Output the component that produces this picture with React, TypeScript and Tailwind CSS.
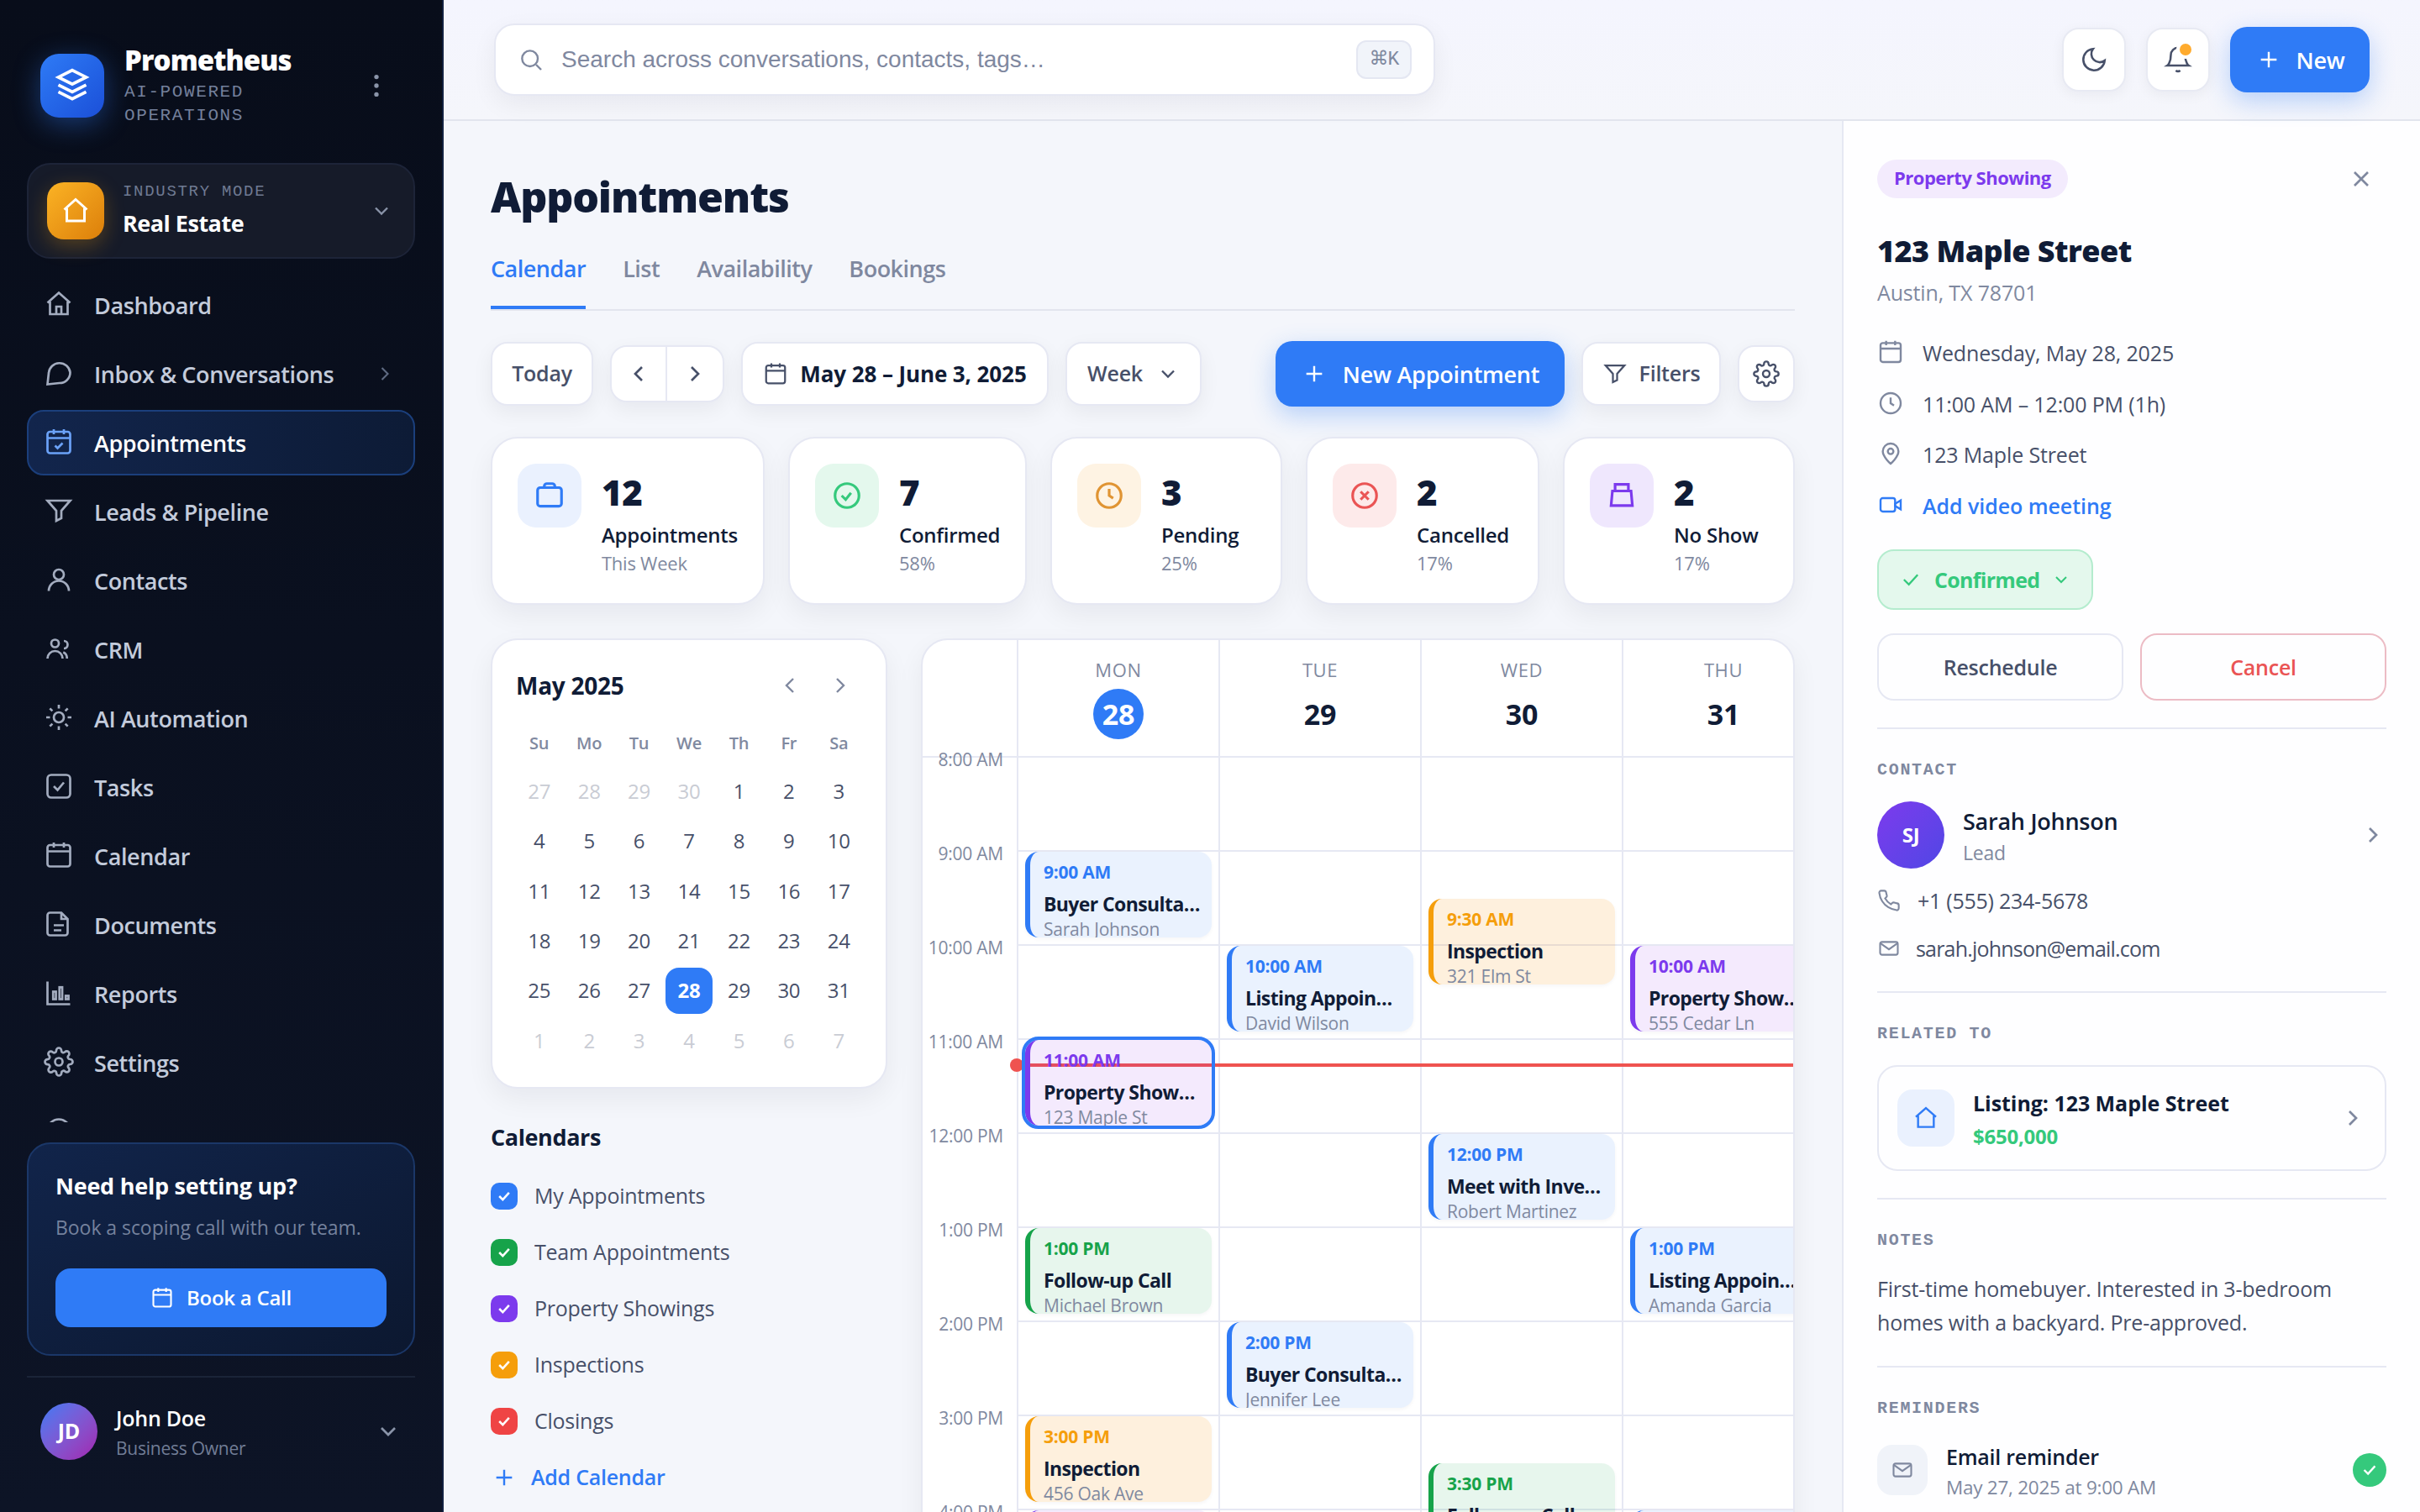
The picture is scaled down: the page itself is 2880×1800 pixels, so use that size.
import clsx from "clsx"
import { FC, ReactNode } from "react"

const MONO = "font-['Liberation_Mono',monospace]"

const GEAR =
  "M19.4 15a1.65 1.65 0 0 0 .33 1.82l.06.06a2 2 0 0 1 0 2.83 2 2 0 0 1-2.83 0l-.06-.06a1.65 1.65 0 0 0-1.82-.33 1.65 1.65 0 0 0-1 1.51V21a2 2 0 0 1-2 2 2 2 0 0 1-2-2v-.09A1.65 1.65 0 0 0 9 19.4a1.65 1.65 0 0 0-1.82.33l-.06.06a2 2 0 0 1-2.83 0 2 2 0 0 1 0-2.83l.06-.06a1.65 1.65 0 0 0 .33-1.82 1.65 1.65 0 0 0-1.51-1H3a2 2 0 0 1-2-2 2 2 0 0 1 2-2h.09A1.65 1.65 0 0 0 4.6 9a1.65 1.65 0 0 0-.33-1.82l-.06-.06a2 2 0 0 1 0-2.83 2 2 0 0 1 2.83 0l.06.06a1.65 1.65 0 0 0 1.82.33H9a1.65 1.65 0 0 0 1-1.51V3a2 2 0 0 1 2-2 2 2 0 0 1 2 2v.09a1.65 1.65 0 0 0 1 1.51 1.65 1.65 0 0 0 1.82-.33l.06-.06a2 2 0 0 1 2.83 0 2 2 0 0 1 0 2.83l-.06.06a1.65 1.65 0 0 0-.33 1.82V9a1.65 1.65 0 0 0 1.51 1H21a2 2 0 0 1 2 2 2 2 0 0 1-2 2h-.09a1.65 1.65 0 0 0-1.51 1z"

const CALENDAR = (
  <>
    <rect x="3" y="4" width="18" height="17" rx="2" />
    <path d="M3 9h18M8 2v4M16 2v4" />
  </>
)

const ICONS: Record<string, ReactNode> = {
  home: <path d="M3 11l9-8 9 8M5 10v10h14V10M10 20v-6h4v6" />,
  house: <path d="M3 11l9-8 9 8M5 10v10h14V10" />,
  chat: <path d="M21 11.6a8.4 8.4 0 0 1-8.6 8.4L3 21l1-9a8.55 8.55 0 0 1 17-.4z" />,
  calendar: CALENDAR,
  calendarCheck: (
    <>
      {CALENDAR}
      <path d="M9 15l2 2 4-4" />
    </>
  ),
  funnel: <path d="M3 4h18l-7 8v6l-4 2v-8z" />,
  user: (
    <>
      <circle cx="12" cy="8" r="4" />
      <path d="M4 21a8 8 0 0 1 16 0" />
    </>
  ),
  users: (
    <>
      <circle cx="9" cy="8" r="3" />
      <path d="M3 20a6 6 0 0 1 12 0M16 6a3 3 0 0 1 0 6M15.5 15c2 .8 3 2.6 3 5" />
    </>
  ),
  sun: (
    <>
      <circle cx="12" cy="12" r="4" />
      <path d="M12 2v3M12 19v3M2 12h3M19 12h3M4.9 4.9l2 2M17.1 17.1l2 2M4.9 19.1l2-2M17.1 6.9l2-2" />
    </>
  ),
  task: (
    <>
      <rect x="3" y="3" width="18" height="18" rx="3" />
      <path d="M8 12l3 3 5-6" />
    </>
  ),
  doc: (
    <path d="M14 3H5a2 2 0 0 0-2 2v14a2 2 0 0 0 2 2h12a2 2 0 0 0 2-2V8zM14 3v5h5M8 13h8M8 17h6" />
  ),
  chart: (
    <>
      <path d="M3 3v18h18" />
      <rect x="7.5" y="11" width="2.2" height="6" />
      <rect x="12.5" y="7.5" width="2.2" height="9.5" />
      <rect x="17.5" y="14.3" width="2.2" height="2.7" />
    </>
  ),
  gear: (
    <>
      <circle cx="12" cy="12" r="3" />
      <path d={GEAR} />
    </>
  ),
  help: <circle cx="12" cy="12" r="9" />,
  layers: <path d="M12 2l9 4.5-9 4.5-9-4.5zM3 11.5l9 4.5 9-4.5M3 16l9 4.5 9-4.5" />,
  search: (
    <>
      <circle cx="11" cy="11" r="7" />
      <path d="M21 21l-4.5-4.5" />
    </>
  ),
  moon: <path d="M21 12.8A9 9 0 1 1 11.2 3 7 7 0 0 0 21 12.8z" />,
  bell: <path d="M6 8a6 6 0 0 1 12 0c0 7 3 9 3 9H3s3-2 3-9M10.3 21a2 2 0 0 0 3.4 0" />,
  plus: <path d="M12 5v14M5 12h14" />,
  x: <path d="M6 6l12 12M18 6L6 18" />,
  down: <path d="M6 9l6 6 6-6" />,
  left: <path d="M15 6l-6 6 6 6" />,
  right: <path d="M9 6l6 6-6 6" />,
  check: <path d="M5 12l5 5 9-10" />,
  case: (
    <>
      <rect x="3" y="6" width="18" height="14" rx="2" />
      <path d="M8 6V5a2 2 0 0 1 2-2h4a2 2 0 0 1 2 2v1" />
    </>
  ),
  okCircle: (
    <>
      <circle cx="12" cy="12" r="9" />
      <path d="M8 12l3 3 4-5" />
    </>
  ),
  xCircle: (
    <>
      <circle cx="12" cy="12" r="9" />
      <path d="M9 9l6 6M15 9l-6 6" />
    </>
  ),
  clock: (
    <>
      <circle cx="12" cy="12" r="9" />
      <path d="M12 7v5l3 2" />
    </>
  ),
  bin: <path d="M5 8.5h14l1 11H4zM7 8.5v-5h10v5" />,
  pin: (
    <>
      <path d="M12 21s-7-6-7-11a7 7 0 0 1 14 0c0 5-7 11-7 11z" />
      <circle cx="12" cy="10" r="2.5" />
    </>
  ),
  video: (
    <>
      <rect x="3" y="6" width="13" height="12" rx="2" />
      <path d="M16 11l5-3v8l-5-3z" />
    </>
  ),
  phone: (
    <path d="M22 16.92v3a2 2 0 0 1-2.18 2 19.79 19.79 0 0 1-8.63-3.07 19.5 19.5 0 0 1-6-6 19.79 19.79 0 0 1-3.07-8.67A2 2 0 0 1 4.11 2h3a2 2 0 0 1 2 1.72c.127.96.361 1.903.7 2.81a2 2 0 0 1-.45 2.11L8.09 9.91a16 16 0 0 0 6 6l1.27-1.27a2 2 0 0 1 2.11-.45c.907.339 1.85.573 2.81.7A2 2 0 0 1 22 16.92z" />
  ),
  mail: (
    <>
      <rect x="3" y="5.5" width="18" height="13" rx="2" />
      <path d="M3.5 7l8.5 6 8.5-6" />
    </>
  ),
}

const Icon: FC<{
  name: string
  size?: number
  stroke?: number
  className?: string
}> = ({ name, size = 32, stroke = 1.8, className }) => (
  <svg
    width={size}
    height={size}
    viewBox="0 0 24 24"
    fill="none"
    stroke="currentColor"
    strokeWidth={stroke}
    className={clsx("shrink-0", className)}
  >
    {ICONS[name]}
  </svg>
)

const NAV = [
  { icon: "home", label: "Dashboard" },
  { icon: "chat", label: "Inbox & Conversations", more: true },
  { icon: "calendarCheck", label: "Appointments", active: true },
  { icon: "funnel", label: "Leads & Pipeline" },
  { icon: "user", label: "Contacts" },
  { icon: "users", label: "CRM" },
  { icon: "sun", label: "AI Automation" },
  { icon: "task", label: "Tasks" },
  { icon: "calendar", label: "Calendar" },
  { icon: "doc", label: "Documents" },
  { icon: "chart", label: "Reports" },
  { icon: "gear", label: "Settings" },
  { icon: "help", label: "" },
]

const Sidebar: FC = () => (
  <aside className="flex h-full w-[528px] shrink-0 flex-col border-r-2 border-[#12203f] bg-linear-to-b from-[#080d1a] to-[#0d1426] px-8">
    <div className="flex h-[152px] shrink-0 items-center pt-[52px] pl-4">
      <div className="flex size-[76px] items-center justify-center rounded-[22px] bg-linear-to-br from-[#2f7bf6] to-[#1c4fd8] text-white shadow-[0_8px_32px_rgba(47,123,246,0.4)]">
        <Icon name="layers" size={44} stroke={2} />
      </div>
      <div className="-mt-1 ml-6 w-[264px]">
        <div className="text-[33px] leading-[48px] font-extrabold tracking-[-0.9px] text-white">
          Prometheus
        </div>
        <div
          className={clsx(
            MONO,
            "text-[21px] leading-[28px] tracking-[1.6px] text-[#74809b]"
          )}
        >
          AI-POWERED
          <br />
          OPERATIONS
        </div>
      </div>
      <svg width="32" height="32" viewBox="0 0 24 24" className="ml-5 text-[#8a94a9]" fill="currentColor">
        <circle cx="12" cy="4.2" r="2" />
        <circle cx="12" cy="12" r="2" />
        <circle cx="12" cy="19.8" r="2" />
      </svg>
    </div>

    <div className="mt-[42px] flex h-[114px] shrink-0 items-center rounded-[28px] border-2 border-[#1d2438] bg-[#161b29] pr-[28px] pl-[22px]">
      <div className="flex size-[68px] items-center justify-center rounded-[20px] bg-linear-to-br from-[#fbb324] to-[#dc7f09] text-white shadow-[0_8px_24px_rgba(245,158,11,0.28)]">
        <Icon name="house" size={36} stroke={2} />
      </div>
      <div className="-mt-[2px] ml-[22px] flex-1">
        <div
          className={clsx(
            MONO,
            "text-[19px] leading-[28px] tracking-[1.7px] text-[#6f7a92]"
          )}
        >
          INDUSTRY MODE
        </div>
        <div className="mt-1 text-[27px] leading-[40px] font-bold tracking-[-0.5px] text-white">
          Real Estate
        </div>
      </div>
      <Icon name="down" size={28} stroke={2} className="-mr-1 text-[#8a94a9]" />
    </div>

    <nav className="mt-4 flex min-h-0 flex-1 flex-col gap-1 overflow-hidden">
      {NAV.map(({ icon, label, active, more }) => (
        <div
          key={icon}
          className={clsx(
            "flex h-[78px] shrink-0 items-center rounded-[20px] border-2 pr-[20px] pl-[18px] text-[27px] font-semibold tracking-[-0.4px]",
            active
              ? "border-[#1b3f7c] bg-linear-to-r from-[#12254c] to-[#0d1b36] text-white"
              : "border-transparent text-[#c3cbdb]"
          )}
        >
          <Icon
            name={icon}
            size={36}
            className={clsx(
              "-mt-[2px]",
              active ? "text-[#6ba2f8]" : "text-[#a3acbf]"
            )}
          />
          <span className="ml-6 flex-1 pt-[3px]">{label}</span>
          {more && <Icon name="right" size={28} className="text-[#5f6b83]" />}
        </div>
      ))}
    </nav>

    <div className="mt-6 h-[254px] shrink-0 rounded-[28px] border-2 border-[#1b3768] bg-linear-to-br from-[#11244a] to-[#0c1830] px-8 pt-[30px]">
      <div className="text-[27px] leading-[40px] font-bold text-white">
        Need help setting up?
      </div>
      <div className="mt-[11px] text-[23px] leading-[36px] tracking-[-0.05px] text-[#75829d]">
        Book a scoping call with our team.
      </div>
      <button className="mt-[31px] flex h-[70px] w-full items-center justify-center gap-[15px] rounded-[18px] bg-[#2f7bf6] text-[24px] font-semibold text-white">
        <Icon name="calendar" size={28} />
        Book a Call
      </button>
    </div>

    <div className="mt-6 h-[2px] shrink-0 bg-[#1a2438]" />
    <div className="mt-[30px] mb-[62px] flex h-[68px] shrink-0 items-center pr-[16px] pl-4">
      <div className="flex size-[68px] items-center justify-center rounded-full bg-linear-to-br from-[#2f7bf6] to-[#a21caf] text-[25px] font-bold text-white">
        JD
      </div>
      <div className="mt-[2px] ml-[22px] flex-1">
        <div className="text-[25px] leading-[34px] font-semibold text-white">
          John Doe
        </div>
        <div className="mt-[3px] text-[21px] leading-[32px] text-[#717d96]">
          Business Owner
        </div>
      </div>
      <Icon name="down" size={32} stroke={2} className="text-[#8a94a9]" />
    </div>
  </aside>
)

const Header: FC = () => (
  <header className="relative z-10 flex h-[144px] shrink-0 items-center border-b-2 border-[#e2e5ee] bg-linear-to-b from-[#f4f5fe] to-[#f5f6fb] px-[60px]">
    <div className="flex h-[86px] w-[1120px] items-center rounded-[24px] border-2 border-[#e6e8f3] bg-white pr-[26px] pl-[26px] shadow-[0_10px_30px_rgba(15,23,42,0.06)]">
      <Icon name="search" size={32} className="text-[#7f889f]" />
      <span className="ml-5 flex-1 font-['Liberation_Sans',sans-serif] text-[28px] tracking-normal text-[#7f889f]">
        Search across conversations, contacts, tags…
      </span>
      <kbd className="flex h-[46px] w-[66px] items-center justify-center rounded-[12px] border-2 border-[#e4e7f2] bg-[#f1f4fa] font-['Liberation_Mono','DejaVu_Sans',monospace] text-[23px] tracking-[-1px] text-[#7f889f]">
        ⌘K
      </kbd>
    </div>
    <div className="ml-auto flex items-center gap-6">
      <button className="flex size-[76px] items-center justify-center rounded-[20px] border-2 border-[#e8eaf3] bg-white text-[#475069] shadow-[0_4px_16px_rgba(15,23,42,0.05)]">
        <Icon name="moon" size={34} />
      </button>
      <button className="relative flex size-[76px] items-center justify-center rounded-[20px] border-2 border-[#e8eaf3] bg-white text-[#475069] shadow-[0_4px_16px_rgba(15,23,42,0.05)]">
        <Icon name="bell" size={34} />
        <span className="absolute top-[13px] right-[16px] size-[22px] rounded-full border-4 border-white bg-[#ffab2e]" />
      </button>
      <button className="flex h-[78px] w-[166px] items-center justify-center gap-[17px] rounded-[20px] bg-[#2f7bf6] text-[27px] font-semibold text-white shadow-[0_10px_30px_rgba(47,123,246,0.32)]">
        <Icon name="plus" size={32} />
        <span className="pt-[2px]">New</span>
      </button>
    </div>
  </header>
)

const BTN =
  "flex items-center justify-center border-2 border-[#e6e8f3] bg-white text-[#475069] shadow-[0_8px_24px_rgba(15,23,42,0.06)]"

const Toolbar: FC = () => (
  <div className="mt-9 flex h-[78px] items-center gap-5 text-[25px] font-semibold">
    <button className={clsx(BTN, "h-[76px] w-[122px] rounded-[20px]")}>Today</button>
    <div className={clsx(BTN, "h-[68px] w-[136px] rounded-[20px]")}>
      <span className="flex h-full w-[66px] items-center justify-center border-r-2 border-[#e6e8f3]">
        <Icon name="left" size={32} stroke={2} />
      </span>
      <span className="flex h-full w-[66px] items-center justify-center">
        <Icon name="right" size={32} stroke={2} />
      </span>
    </div>
    <button className={clsx(BTN, "h-[76px] w-[366px] gap-[14px] rounded-[20px]")}>
      <Icon name="calendar" size={30} />
      <span className="text-[26px] font-bold tracking-[-0.1px] text-[#101c36]">
        May 28 – June 3, 2025
      </span>
    </button>
    <button className={clsx(BTN, "h-[76px] w-[162px] gap-4 rounded-[20px]")}>
      Week
      <Icon name="down" size={28} stroke={2} />
    </button>
    <button className="ml-auto flex h-[78px] w-[344px] items-center justify-center gap-[18px] rounded-[20px] bg-[#2f7bf6] text-[27px] text-white shadow-[0_10px_30px_rgba(47,123,246,0.32)]">
      <Icon name="plus" size={32} />
      <span className="pt-[2px]">New Appointment</span>
    </button>
    <button className={clsx(BTN, "h-[76px] w-[166px] gap-[14px] rounded-[20px]")}>
      <Icon name="funnel" size={30} />
      Filters
    </button>
    <button className={clsx(BTN, "size-[68px] rounded-[20px]")}>
      <Icon name="gear" size={32} />
    </button>
  </div>
)

const STATS = [
  { icon: "case", value: "12", label: "Appointments", sub: "This Week", tile: "bg-[#eaf1fe] text-[#2f7bf6]", width: "w-[326px]" },
  { icon: "okCircle", value: "7", label: "Confirmed", sub: "58%", tile: "bg-[#e4f8ed] text-[#35c97c]", width: "w-[284px]" },
  { icon: "clock", value: "3", label: "Pending", sub: "25%", tile: "bg-[#fef3e3] text-[#e09433]", width: "w-[276px]" },
  { icon: "xCircle", value: "2", label: "Cancelled", sub: "17%", tile: "bg-[#fdeaea] text-[#ea5454]", width: "w-[278px]" },
  { icon: "bin", value: "2", label: "No Show", sub: "17%", tile: "bg-[#efe7fd] text-[#7c3aed]", width: "w-[276px]" },
]

const Stats: FC = () => (
  <div className="mt-9 flex gap-7">
    {STATS.map(({ icon, value, label, sub, tile, width }) => (
      <div
        key={label}
        className={clsx(
          "flex h-[200px] gap-6 rounded-[32px] border-2 border-[#e6e8f3] bg-white p-[30px] pr-0 shadow-[0_12px_32px_rgba(15,23,42,0.06)]",
          width
        )}
      >
        <div
          className={clsx(
            "flex size-[76px] shrink-0 items-center justify-center rounded-[22px]",
            tile
          )}
        >
          <Icon name={icon} size={38} stroke={2} />
        </div>
        <div className="pt-[10px]">
          <div className="text-[42px] leading-[48px] font-extrabold text-[#101c36]">
            {value}
          </div>
          <div className="mt-[11px] text-[24px] leading-[32px] font-semibold text-[#101c36]">
            {label}
          </div>
          <div className="mt-[1px] text-[22px] leading-[32px] text-[#8089a0]">{sub}</div>
        </div>
      </div>
    ))}
  </div>
)

const MONTH = [
  27, 28, 29, 30, ...Array.from({ length: 31 }, (_, i) => i + 1), 1, 2, 3, 4, 5, 6, 7,
]

const MiniCalendar: FC = () => (
  <div className="h-[536px] rounded-[32px] border-2 border-[#e6e8f3] bg-white p-7 shadow-[0_12px_32px_rgba(15,23,42,0.06)]">
    <div className="flex h-[52px] items-center pr-[10px]">
      <span className="flex-1 text-[28px] font-bold text-[#101c36]">May 2025</span>
      <Icon name="left" size={32} className="mr-7 text-[#7f889f]" />
      <Icon name="right" size={32} className="text-[#7f889f]" />
    </div>
    <div className="mt-[18px] grid grid-cols-7 gap-1 text-center">
      {["Su", "Mo", "Tu", "We", "Th", "Fr", "Sa"].map((d) => (
        <span key={d} className="text-[20px] leading-[50px] font-semibold text-[#8089a0]">
          {d}
        </span>
      ))}
      {MONTH.map((d, i) => {
        const outside = i < 4 || i > 34
        const today = i === 31
        return (
          <span
            key={i}
            className={clsx(
              "flex aspect-square items-center justify-center rounded-[16px] text-[24px]",
              today && "bg-[#2f7bf6] font-bold text-white",
              outside && "text-[#c9ccd4]",
              !today && !outside && "text-[#475069]"
            )}
          >
            {d}
          </span>
        )
      })}
    </div>
  </div>
)

const CALENDARS = [
  { label: "My Appointments", color: "bg-[#2f7bf6]" },
  { label: "Team Appointments", color: "bg-[#16a34a]" },
  { label: "Property Showings", color: "bg-[#7c3aed]" },
  { label: "Inspections", color: "bg-[#f59e0b]" },
  { label: "Closings", color: "bg-[#ef4444]" },
]

const CalendarList: FC = () => (
  <div className="mt-[38px]">
    <div className="text-[27px] leading-[40px] font-bold tracking-[-0.4px] text-[#101c36]">
      Calendars
    </div>
    <div className="mt-4">
      {CALENDARS.map(({ label, color }) => (
        <div key={label} className="flex h-[67px] items-center gap-5 text-[25px] text-[#475069]">
          <span
            className={clsx(
              "flex size-8 items-center justify-center rounded-[10px] text-white",
              color
            )}
          >
            <Icon name="check" size={20} stroke={3} />
          </span>
          <span className="pt-[1px]">{label}</span>
        </div>
      ))}
      <div className="flex h-[67px] items-center gap-4 text-[25px] font-semibold text-[#2f7bf6]">
        <Icon name="plus" size={32} />
        <span className="pt-[1px]">Add Calendar</span>
      </div>
    </div>
  </div>
)

const HOUR = 112

const TONES = {
  blue: { box: "border-[#2f7bf6] bg-[#2f7bf6]/10", time: "text-[#2f7bf6]" },
  purple: { box: "border-[#7c3aed] bg-[#9333ea]/10", time: "text-[#7c3aed]" },
  green: { box: "border-[#16a34a] bg-[#16a34a]/10", time: "text-[#16a34a]" },
  orange: { box: "border-[#f59e0b] bg-[#fb9a1e]/15", time: "text-[#f59e0b]" },
}

type Event = {
  at: number
  time: string
  title: string
  sub: string
  tone: keyof typeof TONES
  selected?: boolean
}

const DAYS: { name: string; date: number; events: Event[] }[] = [
  {
    name: "MON",
    date: 28,
    events: [
      { at: 9, time: "9:00 AM", title: "Buyer Consulta…", sub: "Sarah Johnson", tone: "blue" },
      { at: 11, time: "11:00 AM", title: "Property Show…", sub: "123 Maple St", tone: "purple", selected: true },
      { at: 13, time: "1:00 PM", title: "Follow-up Call", sub: "Michael Brown", tone: "green" },
      { at: 15, time: "3:00 PM", title: "Inspection", sub: "456 Oak Ave", tone: "orange" },
      { at: 16, time: "", title: "", sub: "", tone: "purple" },
    ],
  },
  {
    name: "TUE",
    date: 29,
    events: [
      { at: 10, time: "10:00 AM", title: "Listing Appoin…", sub: "David Wilson", tone: "blue" },
      { at: 14, time: "2:00 PM", title: "Buyer Consulta…", sub: "Jennifer Lee", tone: "blue" },
    ],
  },
  {
    name: "WED",
    date: 30,
    events: [
      { at: 9.5, time: "9:30 AM", title: "Inspection", sub: "321 Elm St", tone: "orange" },
      { at: 12, time: "12:00 PM", title: "Meet with Inve…", sub: "Robert Martinez", tone: "blue" },
      { at: 15.5, time: "3:30 PM", title: "Follow-up Call", sub: "", tone: "green" },
    ],
  },
  {
    name: "THU",
    date: 31,
    events: [
      { at: 10, time: "10:00 AM", title: "Property Show…", sub: "555 Cedar Ln", tone: "purple" },
      { at: 13, time: "1:00 PM", title: "Listing Appoin…", sub: "Amanda Garcia", tone: "blue" },
      { at: 16, time: "", title: "", sub: "", tone: "blue" },
    ],
  },
]

const TIMES = [
  "8:00 AM",
  "9:00 AM",
  "10:00 AM",
  "11:00 AM",
  "12:00 PM",
  "1:00 PM",
  "2:00 PM",
  "3:00 PM",
  "4:00 PM",
]

const EventCard: FC<{ event: Event }> = ({ event }) => (
  <div
    className={clsx(
      "absolute right-2 left-2 z-20 h-[102px] overflow-hidden rounded-[16px] border-l-[6px] pt-[10px] pl-4 shadow-[0_2px_4px_rgba(15,23,42,0.04)]",
      TONES[event.tone].box,
      event.selected && "outline-4 outline-[#2f7bf6]"
    )}
    style={{ top: (event.at - 8) * HOUR }}
  >
    <div className={clsx("text-[21px] leading-[28px] font-bold", TONES[event.tone].time)}>
      {event.time}
    </div>
    <div className="mt-[8px] text-[23px] leading-[32px] font-bold tracking-[-0.6px] whitespace-nowrap text-[#101c36]">
      {event.title}
    </div>
    <div className="text-[21px] leading-[28px] text-[#8089a0]">{event.sub}</div>
  </div>
)

const WeekGrid: FC = () => (
  <div className="h-[1300px] w-[1040px] overflow-hidden rounded-[32px] border-2 border-[#e6e8f3] bg-white shadow-[0_12px_32px_rgba(15,23,42,0.06)]">
    <div className="flex w-max">
      <div className="h-[140px] w-[114px] border-r-2 border-b-2 border-[#e6e8f3]" />
      {DAYS.map(({ name, date }, i) => (
        <div
          key={name}
          className="flex h-[140px] w-[240px] flex-col items-center border-r-2 border-b-2 border-[#e6e8f3] pt-[19px]"
        >
          <span className="text-[22px] leading-[32px] tracking-[0.6px] text-[#8089a0]">
            {name}
          </span>
          <span
            className={clsx(
              "mt-[7px] flex size-[60px] items-center justify-center rounded-full pt-[1px] text-[34px] font-bold",
              i === 0 ? "bg-[#2f7bf6] text-white" : "text-[#101c36]"
            )}
          >
            {date}
          </span>
        </div>
      ))}
    </div>
    <div className="relative flex w-max">
      <div className="w-[114px] border-r-2 border-[#e6e8f3]">
        {TIMES.map((t) => (
          <div
            key={t}
            className="-mt-3 mb-3 h-[112px] pr-[16px] text-right text-[21px] leading-[29px] text-[#8089a0]"
          >
            {t}
          </div>
        ))}
      </div>
      {/* current time */}
      <div className="absolute top-[364px] right-0 left-[112px] z-10 h-1 bg-[#ef5350]">
        <span className="absolute -top-[6px] -left-2 size-4 rounded-full bg-[#ef5350]" />
      </div>
      {DAYS.map(({ name, events }) => (
        <div key={name} className="relative w-[240px] border-r-2 border-[#e6e8f3]">
          {TIMES.map((t) => (
            <div key={t} className="h-[112px] border-b-2 border-[#e6e8f3]" />
          ))}
          {events.map((e) => (
            <EventCard key={e.at} event={e} />
          ))}
        </div>
      ))}
    </div>
  </div>
)

const TABS = ["Calendar", "List", "Availability", "Bookings"]

const Main: FC = () => (
  <main className="w-[1664px] shrink-0 overflow-hidden px-14 pt-[58px]">
    <h1 className="text-[50px] leading-[64px] font-extrabold tracking-[-1.15px] text-[#101c36]">
      Appointments
    </h1>
    <div className="mt-[34px] flex gap-11 border-b-2 border-[#e2e5ee]">
      {TABS.map((tab, i) => (
        <span
          key={tab}
          className={clsx(
            "border-b-4 pb-6 text-[27px] leading-[40px] font-semibold tracking-[-0.5px]",
            i === 0 ? "border-[#2f7bf6] text-[#2f7bf6]" : "border-transparent text-[#7f889f]"
          )}
        >
          {tab}
        </span>
      ))}
    </div>
    <Toolbar />
    <Stats />
    <div className="mt-10 flex gap-10">
      <div className="w-[472px] shrink-0">
        <MiniCalendar />
        <CalendarList />
      </div>
      <WeekGrid />
    </div>
  </main>
)

const Section: FC<{ title: string; children: ReactNode }> = ({ title, children }) => (
  <section className="mt-8 border-t-2 border-[#e6e8f3] pt-[35px]">
    <h3
      className={clsx(
        MONO,
        "mb-[23px] text-[20px] leading-[28px] font-bold tracking-[1.7px] text-[#7f889f]"
      )}
    >
      {title}
    </h3>
    {children}
  </section>
)

const DETAILS = [
  { icon: "calendar", text: "Wednesday, May 28, 2025" },
  { icon: "clock", text: "11:00 AM – 12:00 PM (1h)" },
  { icon: "pin", text: "123 Maple Street" },
  { icon: "video", text: "Add video meeting", link: true },
]

const DetailPanel: FC = () => (
  <aside className="flex-1 overflow-hidden border-l-2 border-[#e6e8f3] bg-[#fefeff] px-10 pt-[46px]">
    <div className="flex items-center">
      <span className="flex h-[46px] items-center rounded-full bg-[#f3ebfd] px-5 pb-[3px] text-[22px] font-bold tracking-[-0.5px] text-[#7c3aed]">
        Property Showing
      </span>
      <Icon name="x" size={32} stroke={2} className="mr-[14px] ml-auto text-[#7f889f]" />
    </div>
    <h2 className="mt-[37px] text-[36px] leading-[52px] font-extrabold tracking-[-0.55px] text-[#101c36]">
      123 Maple Street
    </h2>
    <div className="mt-[5px] text-[25px] leading-[36px] tracking-[-0.15px] text-[#8089a0]">
      Austin, TX 78701
    </div>
    <div className="mt-[37px] flex flex-col gap-[24.6px]">
      {DETAILS.map(({ icon, text, link }) => (
        <div
          key={icon}
          className={clsx(
            "flex h-9 items-center text-[25px]",
            link ? "font-semibold tracking-[-0.05px] text-[#2f7bf6]" : "tracking-[-0.15px] text-[#475069]"
          )}
        >
          <Icon
            name={icon}
            size={32}
            className={clsx("-mt-1 mr-[22px]", !link && "text-[#7f889f]")}
          />
          {text}
        </div>
      ))}
    </div>
    <button className="mt-[33px] flex h-[72px] items-center gap-[14px] rounded-[20px] border-2 border-[#b4ecce] bg-[#e4f8ed] px-6 text-[25px] font-bold tracking-[-0.7px] text-[#35c97c]">
      <Icon name="check" size={28} stroke={2} />
      <span className="pt-[2px]">Confirmed</span>
      <Icon name="down" size={24} stroke={2} />
    </button>
    <div className="mt-7 grid grid-cols-2 gap-5 text-[25px] font-semibold">
      <button className="h-20 rounded-[20px] border-2 border-[#e6e8f3] pt-[1px] text-[#475069]">
        Reschedule
      </button>
      <button className="h-20 rounded-[20px] border-2 border-[#ecbcc5] pt-[1px] text-[#ea5454]">
        Cancel
      </button>
    </div>

    <Section title="CONTACT">
      <div className="flex h-20 items-center">
        <div className="flex size-20 items-center justify-center rounded-full bg-linear-to-br from-[#7c3aed] to-[#4f46e5] text-[24px] font-bold text-white">
          SJ
        </div>
        <div className="mt-[4px] ml-[22px] flex-1">
          <div className="text-[27px] leading-[36px] font-semibold text-[#101c36]">
            Sarah Johnson
          </div>
          <div className="mt-[2px] text-[23px] leading-[34px] text-[#8089a0]">Lead</div>
        </div>
        <Icon name="right" size={32} stroke={2} className="text-[#7f889f]" />
      </div>
      <div className="mt-[21px] flex h-9 items-center gap-5 text-[25px] text-[#475069]">
        <Icon name="phone" size={28} className="-mt-[2px] text-[#7f889f]" />
        +1 (555) 234-5678
      </div>
      <div className="mt-[21px] flex h-9 items-center gap-[18px] text-[25px] tracking-[-0.8px] text-[#475069]">
        <Icon name="mail" size={28} className="-mt-[2px] text-[#7f889f]" />
        sarah.johnson@email.com
      </div>
    </Section>

    <Section title="RELATED TO">
      <div className="flex h-[126px] items-center rounded-[24px] border-2 border-[#e6e8f3] pr-[22px] pl-[22px]">
        <div className="flex size-[68px] items-center justify-center rounded-[18px] bg-[#eaf1fe] text-[#2f7bf6]">
          <Icon name="house" size={32} />
        </div>
        <div className="mt-[3px] ml-[22px] flex-1">
          <div className="text-[25px] leading-[36px] font-bold tracking-[-0.05px] text-[#101c36]">
            Listing: 123 Maple Street
          </div>
          <div className="mt-[5px] text-[24px] leading-[34px] font-bold text-[#35c97c]">
            $650,000
          </div>
        </div>
        <Icon name="right" size={32} stroke={2} className="text-[#7f889f]" />
      </div>
    </Section>

    <Section title="NOTES">
      <p className="text-[25px] leading-[40px] tracking-[-0.2px] text-[#475069]">
        First-time homebuyer. Interested in 3-bedroom homes with a backyard. Pre-approved.
      </p>
    </Section>

    <Section title="REMINDERS">
      <div className="mt-[29px] flex h-[60px] items-center">
        <div className="flex size-[60px] items-center justify-center rounded-[18px] bg-[#f0f3f9] text-[#7f889f]">
          <Icon name="mail" size={28} />
        </div>
        <div className="mt-1 ml-[22px] flex-1">
          <div className="text-[25px] leading-[34px] font-semibold text-[#101c36]">
            Email reminder
          </div>
          <div className="mt-[4px] text-[22.5px] leading-[32px] text-[#8089a0]">
            May 27, 2025 at 9:00 AM
          </div>
        </div>
        <div className="flex size-10 items-center justify-center rounded-full bg-[#35c97c] text-white">
          <Icon name="check" size={22} stroke={2.6} />
        </div>
      </div>
    </Section>
  </aside>
)

export default function App() {
  return (
    <div className="flex h-[1800px] w-[2880px] overflow-hidden bg-[#f4f6fb] font-['Open_Sans',sans-serif] text-[25px] tracking-[-0.25px]">
      <Sidebar />
      <div className="flex min-w-0 flex-1 flex-col">
        <Header />
        <div className="flex min-h-0 flex-1">
          <Main />
          <DetailPanel />
        </div>
      </div>
    </div>
  )
}
